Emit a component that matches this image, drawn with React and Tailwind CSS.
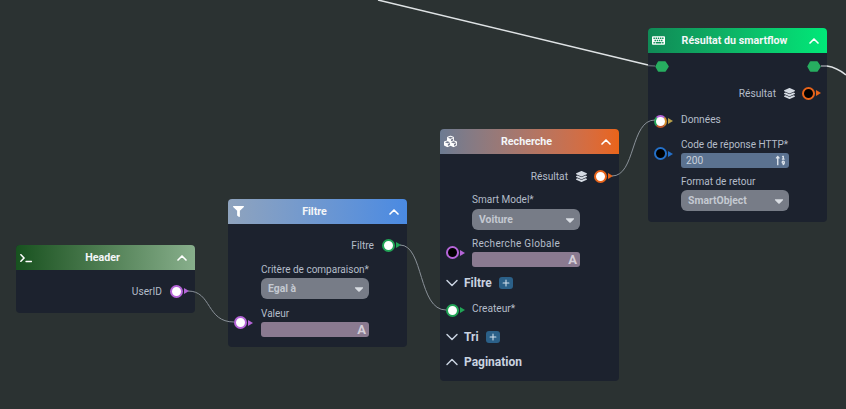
import React from 'react'
import { ChevronUp, ChevronDown, Plus } from 'lucide-react'
import { FaTerminal, FaFilter, FaCubes, FaKeyboard, FaLayerGroup, FaCaretDown, FaSortNumericUp } from 'react-icons/fa'

const PORT = {
  purple: { border: 'border-[#b565d8]', arrow: 'border-l-[#b565d8]' },
  green: { border: 'border-[#22a557]', arrow: 'border-l-[#22a557]' },
  orange: { border: 'border-[#e8641a]', arrow: 'border-l-[#e8641a]' },
  blue: { border: 'border-[#2470c8]', arrow: 'border-l-[#2470c8]' },
  mixed: { border: 'border-t-[#b565d8] border-r-[#d08a2a] border-b-[#c0562a] border-l-[#22a557]', arrow: 'border-l-[#b8a04a]' },
}

function Port({ color, filled = true }) {
  const c = PORT[color]
  return (
    <span className="flex items-center w-[19px] shrink-0">
      <span className={`w-[13px] h-[13px] rounded-full border-2 ${c.border} ${filled ? 'bg-white' : 'bg-black'}`} />
      <span className={`ml-px w-0 h-0 border-y-[3px] border-y-transparent border-l-[5px] ${c.arrow}`} />
    </span>
  )
}

function ExecPort() {
  return (
    <svg width="14" height="11" viewBox="0 0 14 11">
      <path d="M3.5 1 H10 L13 5.5 L10 10 H3.5 L1 5.5 Z" fill="#27ae60" stroke="#27ae60" strokeWidth="1.5" strokeLinejoin="round" />
    </svg>
  )
}

function Node({ className, gradient, icon, title, children }) {
  return (
    <div className={`absolute w-[179px] rounded-[4px] bg-[#1c222e] ${className}`}>
      <div className={`relative flex items-center justify-center h-[25px] pr-[6px] rounded-t-[4px] bg-gradient-to-r ${gradient}`}>
        <span className="absolute left-[3px] flex items-center justify-center w-[14px] text-white">{icon}</span>
        <span className="text-[10.7px] leading-[14px] font-bold text-[#f4f6f8]">{title}</span>
        <ChevronUp size={16} strokeWidth={2.5} className="absolute right-[5px] text-white" />
      </div>
      {children}
    </div>
  )
}

function Output({ label, color, filled, layers, className }) {
  return (
    <div className={`flex items-center justify-end h-4 pr-[6px] ${className}`}>
      <span className="pt-px text-[10.2px] leading-[14px] text-[#b4bdc9]">{label}</span>
      {layers && <FaLayerGroup size={11} className="ml-[8px] -mr-px text-[#d5dbe3]" />}
      <span className="w-[8px]" />
      <Port color={color} filled={filled} />
    </div>
  )
}

function Select({ value }) {
  return (
    <div className="flex items-center justify-between h-[21px] pl-[7px] pr-[3px] rounded-[6px] bg-[#777c87] text-[10.4px] leading-[14px] font-bold text-[#c4c9d1]">
      <span>{value}</span>
      <FaCaretDown size={14} className="text-[#d8dce2]" />
    </div>
  )
}

function TextInput() {
  return (
    <div className="flex items-center justify-end h-[15px] pr-[3px] rounded-[3px] bg-[#8a7a90] text-[13px] leading-[15px] font-bold text-[#d4cfd8]">
      A
    </div>
  )
}

function Field({ label, color, filled, gutter = 'w-[27px]', labelClass = 'pt-px', className, children }) {
  return (
    <div className={`flex items-center pl-[6px] ${className}`}>
      <span className={`flex items-center shrink-0 translate-y-px ${gutter}`}>
        {color && <Port color={color} filled={filled} />}
      </span>
      <div className="w-[108px]">
        <div className={`h-[14px] text-[10px] leading-[14px] text-[#b4bdc9] whitespace-nowrap ${labelClass}`}>{label}</div>
        <div className="mt-[2px]">{children}</div>
      </div>
    </div>
  )
}

function Section({ label, open, plus, className }) {
  const Chevron = open ? ChevronUp : ChevronDown
  return (
    <div className={`flex items-center h-4 pl-[2px] ${className}`}>
      <Chevron size={20} strokeWidth={1.75} className="text-[#c9d3e0]" />
      <span className="ml-[2px] text-[12px] leading-4 font-bold text-[#c9d3e0]">{label}</span>
      {plus && (
        <span className="ml-[7px] flex items-center justify-center w-[14px] h-[12px] rounded-[3px] bg-[#2b6088]">
          <Plus size={10} strokeWidth={2.5} className="text-[#d5e2ee]" />
        </span>
      )}
    </div>
  )
}

function Edges() {
  return (
    <svg className="absolute inset-0 pointer-events-none" width="846" height="409" fill="none">
      <path d="M378 0 L 648 65" stroke="#dfe3e5" strokeWidth="1.5" />
      <path d="M648 65.5 L 655 66" stroke="#59606a" strokeWidth="1.5" />
      <path d="M821 66 L 827 66" stroke="#8f959d" strokeWidth="1.5" />
      <path d="M827 66 C 834 67 840 70 846 75" stroke="#dfe3e5" strokeWidth="1.5" />
      <path d="M188 291 C 212 291 206 322 234 322" stroke="#8a9199" />
      <path d="M400 245 C 424 245 418 310 446 310" stroke="#8a9199" />
      <path d="M612 176 C 636 176 630 120 655 120" stroke="#8a9199" />
    </svg>
  )
}

export default function App() {
  return (
    <div className="relative w-[846px] h-[409px] overflow-hidden bg-[#2b3232] font-['Roboto',sans-serif]">
      <Node
        className="left-[16px] top-[245px] h-[68px]"
        gradient="from-[#17521f] to-[#88af8c]"
        icon={<FaTerminal size={12} />}
        title="Header"
      >
        <Output className="mt-[13px]" label="UserID" color="purple" />
      </Node>

      <Node
        className="left-[228px] top-[199px] h-[148px]"
        gradient="from-[#8fa3bd] to-[#4a8ae2]"
        icon={<FaFilter size={11} />}
        title="Filtre"
      >
        <Output className="mt-[13px]" label="Filtre" color="green" />
        <Field className="mt-[9px]" label="Critère de comparaison*">
          <Select value="Egal à" />
        </Field>
        <Field className="mt-[7px]" label="Valeur" color="purple">
          <TextInput />
        </Field>
      </Node>

      <Node
        className="left-[440px] top-[129px] h-[252px]"
        gradient="from-[#6c7b92] to-[#ea6417]"
        icon={<FaCubes size={13} />}
        title="Recherche"
      >
        <Output className="mt-[14px]" label="Résultat" color="orange" layers />
        <Field className="mt-[9px]" gutter="w-[26px]" labelClass="" label="Smart Model*">
          <Select value="Voiture" />
        </Field>
        <Field className="mt-[6px]" gutter="w-[26px]" labelClass="pt-px tracking-[0.3px]" label="Recherche Globale" color="purple" filled={false}>
          <TextInput />
        </Field>
        <Section className="mt-[8px]" label="Filtre" plus />
        <div className="mt-[9px] flex items-center h-4 pl-[6px]">
          <span className="w-[26px] shrink-0 translate-y-[2px]">
            <Port color="green" />
          </span>
          <span className="pt-px text-[10.2px] leading-[14px] text-[#b4bdc9]">Createur*</span>
        </div>
        <Section className="mt-[13px]" label="Tri" plus />
        <Section className="mt-[9px]" label="Pagination" open />
      </Node>

      <Node
        className="left-[648px] top-[28px] h-[194px]"
        gradient="from-[#108a56] to-[#00e878]"
        icon={<FaKeyboard size={13} />}
        title="Résultat du smartflow"
      >
        <div className="mt-[7px] flex items-center justify-between h-3 pl-[7px] pr-[6px]">
          <ExecPort />
          <ExecPort />
        </div>
        <Output className="mt-[13px]" label="Résultat" color="orange" filled={false} layers />
        <div className="mt-[11px] flex items-center h-4 pl-[6px]">
          <span className="w-[27px] shrink-0 translate-y-px">
            <Port color="mixed" />
          </span>
          <span className="text-[10.2px] leading-[14px] text-[#b4bdc9]">Données</span>
        </div>
        <Field className="mt-[9px]" label="Code de réponse HTTP*" color="blue" filled={false}>
          <div className="flex items-center justify-between h-[15px] pl-[5px] pr-[3px] rounded-[3px] bg-[#5b7290] text-[10.2px] leading-[14px] text-[#c9d1db]">
            <span>200</span>
            <FaSortNumericUp size={11} className="text-[#dde3ea]" />
          </div>
        </Field>
        <Field className="mt-[6px]" label="Format de retour">
          <Select value="SmartObject" />
        </Field>
      </Node>

      <Edges />
    </div>
  )
}
